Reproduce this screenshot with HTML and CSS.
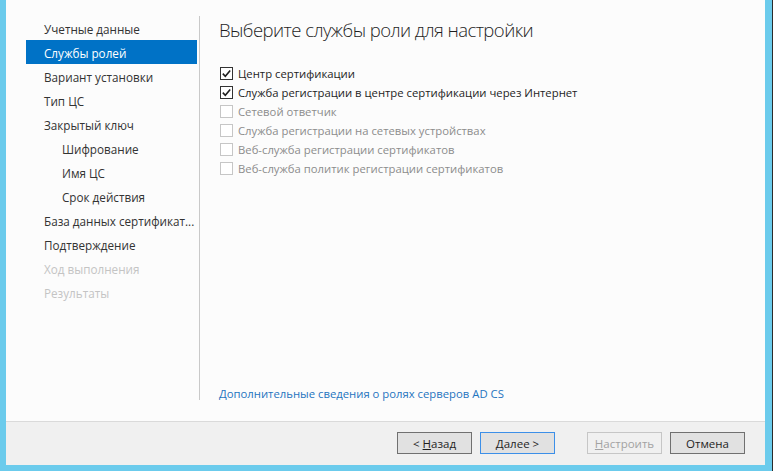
FILE: index.html
```html
<!DOCTYPE html>
<html lang="ru">
<head>
    <meta charset="UTF-8">
    <title>Службы ролей</title>
    <link rel="stylesheet" href="styles.css">
</head>
<body>
    <div class="window">
        <div class="content">
            <ul class="nav">
                <li class="nav-item">Учетные данные</li>
                <li class="nav-item active">Службы ролей</li>
                <li class="nav-item">Вариант установки</li>
                <li class="nav-item">Тип ЦС</li>
                <li class="nav-item">Закрытый ключ</li>
                <li class="nav-item sub">Шифрование</li>
                <li class="nav-item sub">Имя ЦС</li>
                <li class="nav-item sub">Срок действия</li>
                <li class="nav-item">База данных сертификат...</li>
                <li class="nav-item">Подтверждение</li>
                <li class="nav-item disabled">Ход выполнения</li>
                <li class="nav-item disabled">Результаты</li>
            </ul>

            <div class="panel">
                <h1 class="title">Выберите службы роли для настройки</h1>

                <div class="options">
                    <label class="option">
                        <span class="box checked"><svg width="11" height="11" viewBox="0 0 11 11"><polyline points="1.8,5.6 4.3,8.2 9.2,2.4" fill="none" stroke="#1e1e1e" stroke-width="1.6"/></svg></span>
                        Центр сертификации
                    </label>
                    <label class="option">
                        <span class="box checked"><svg width="11" height="11" viewBox="0 0 11 11"><polyline points="1.8,5.6 4.3,8.2 9.2,2.4" fill="none" stroke="#1e1e1e" stroke-width="1.6"/></svg></span>
                        Служба регистрации в центре сертификации через Интернет
                    </label>
                    <label class="option off"><span class="box"></span>Сетевой ответчик</label>
                    <label class="option off"><span class="box"></span>Служба регистрации на сетевых устройствах</label>
                    <label class="option off"><span class="box"></span>Веб-служба регистрации сертификатов</label>
                    <label class="option off"><span class="box"></span>Веб-служба политик регистрации сертификатов</label>
                </div>

                <a class="more" href="#">Дополнительные сведения о ролях серверов AD CS</a>
            </div>
        </div>

        <div class="footer">
            <button class="btn">&lt; <u>Н</u>азад</button>
            <button class="btn default"><u>Д</u>алее &gt;</button>
            <button class="btn wide-gap" disabled><u>Н</u>астроить</button>
            <button class="btn">Отмена</button>
        </div>
    </div>
</body>
</html>
```

FILE: styles.css
```css
html, body {
    margin: 0;
    padding: 0;
    height: 100%;
}

body {
    background: #6bcbec;
    box-shadow: inset -1px 0 #2b2b2b;
    font-family: "Open Sans", "Noto Sans", sans-serif;
    font-size: 11.3px;
    color: #1e1e1e;
}

.window {
    margin-left: 6px;
    width: 759px;
    height: 465px;
    display: flex;
    flex-direction: column;
    background: #f0f0f0;
}

.content {
    height: 422px;
    box-sizing: border-box;
    padding: 16px 0 18px 0;
    display: flex;
    background: #fcfcfc;
    border-bottom: 1px solid #dadada;
}

.nav {
    list-style: none;
    margin: 0 0 3px 20px;
    padding: 0 2px 0 0;
    width: 171px;
    border-right: 1px solid #c9c9c9;
}

.nav-item {
    box-sizing: border-box;
    height: 24px;
    padding-top: 2px;
    line-height: 22px;
    padding-left: 18px;
    color: #333333;
    white-space: nowrap;
    font-size: 11.7px;
}

.nav-item.sub {
    padding-left: 36px;
}

.nav-item.active {
    background: #0072c6;
    color: #ffffff;
}

.nav-item.disabled {
    color: #c4c4c4;
}

.panel {
    flex: 1;
    display: flex;
    flex-direction: column;
    padding-left: 19px;
}

.title {
    margin: 0;
    font-weight: 300;
    font-size: 18.5px;
    letter-spacing: -0.55px;
    line-height: 28px;
    color: #1e1e1e;
}

.options {
    margin-top: 20px;
    display: flex;
    flex-direction: column;
}

.option {
    height: 19px;
    display: flex;
    align-items: center;
    white-space: nowrap;
    color: #1e1e1e;
}

.option.off {
    color: #8c8c8c;
}

.box {
    width: 11px;
    height: 11px;
    border: 1px solid #333333;
    background: #ffffff;
    margin: 0 5px 0 1px;
    display: flex;
}

.option.off .box {
    border-color: #c6c6c6;
}

.more {
    margin-top: auto;
    line-height: 18px;
    color: #1f74bf;
    text-decoration: none;
}

.footer {
    flex: 1;
    display: flex;
    justify-content: flex-end;
    align-items: flex-start;
    padding: 10px 20px 0 0;
    gap: 8px;
}

.btn {
    width: 75px;
    height: 22px;
    padding: 0;
    font-family: "Open Sans", "Noto Sans", sans-serif;
    font-size: 11.5px;
    color: #1e1e1e;
    background: #e1e1e1;
    border: 1px solid #707070;
}

.btn.default {
    border-color: #3c8fe8;
}

.btn:disabled {
    background: #f0f0f0;
    border-color: #c6c6c6;
    color: #a2a2a2;
}

.btn.wide-gap {
    margin-left: 24px;
}
```
